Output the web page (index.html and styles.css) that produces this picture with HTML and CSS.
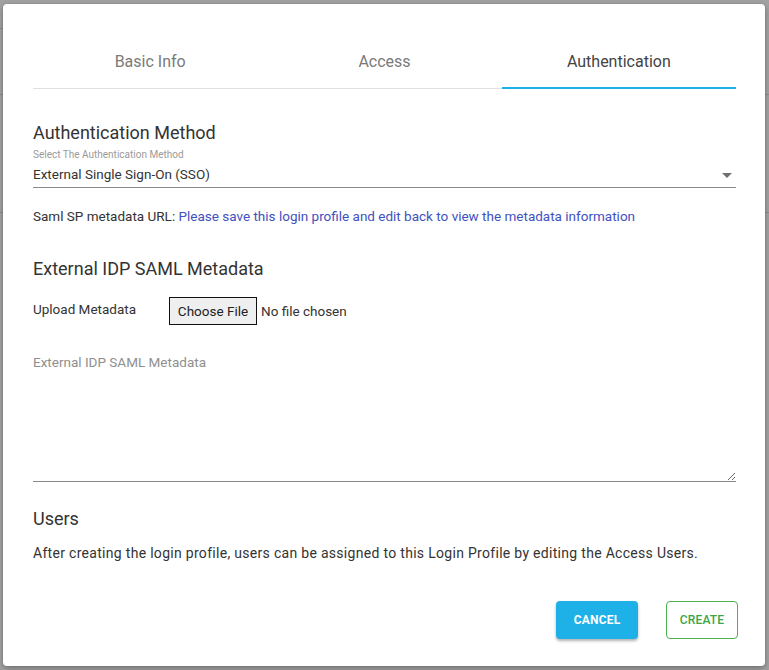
FILE: index.html
```html
<!DOCTYPE html>
<html lang="en">
<head>
<meta charset="utf-8">
<title>Login Profile</title>
<link rel="stylesheet" href="styles.css">
</head>
<body>
<div class="dialog">
  <div class="tabs">
    <div class="tab">Basic Info</div>
    <div class="tab">Access</div>
    <div class="tab active">Authentication</div>
  </div>

  <h2 class="heading first">Authentication Method</h2>
  <div class="select">
    <div class="select-label">Select The Authentication Method</div>
    <div class="select-value">
      <span>External Single Sign-On (SSO)</span>
      <span class="arrow"></span>
    </div>
  </div>

  <p class="saml">Saml SP metadata URL: <a class="link" href="#">Please save this login profile and edit back to view the metadata information</a></p>

  <h2 class="heading idp">External IDP SAML Metadata</h2>
  <div class="upload">
    <span class="upload-label">Upload Metadata</span>
    <input class="file" type="file">
  </div>
  <textarea class="metadata" placeholder="External IDP SAML Metadata"></textarea>

  <h2 class="heading users">Users</h2>
  <p class="note">After creating the login profile, users can be assigned to this Login Profile by editing the Access Users.</p>

  <div class="actions">
    <button class="btn cancel" type="button">CANCEL</button>
    <button class="btn create" type="button">CREATE</button>
  </div>
</div>
</body>
</html>
```
FILE: styles.css
```css
html, body {
  margin: 0;
  padding: 0;
}
body {
  width: 769px;
  height: 670px;
  overflow: hidden;
  font-family: Roboto, "Liberation Sans", sans-serif;
  background-color: #a1a1a1;
  background-image:
    linear-gradient(#8e8e8e, #8e8e8e),
    linear-gradient(#8e8e8e, #8e8e8e),
    linear-gradient(#8e8e8e, #8e8e8e),
    linear-gradient(#8e8e8e, #8e8e8e);
  background-repeat: no-repeat;
  background-size: 10px 1px, 769px 1px, 769px 1px, 20px 1px;
  background-position: 0 28px, 0 94px, 0 212px, 749px 94px;
  padding-top: 4px;
  box-sizing: border-box;
}
.dialog {
  margin-left: 3px;
  width: 762px;
  height: 662px;
  box-sizing: border-box;
  background: #fff;
  border-radius: 4px;
  padding: 37px 29px 0 30px;
  box-shadow: 0 3px 6px rgba(0,0,0,0.25), 0 0 2px rgba(0,0,0,0.2);
  color: #333;
}
.tabs {
  display: grid;
  grid-template-columns: 1fr 1fr 1fr;
  border-bottom: 1px solid #e0e0e0;
}
.tab {
  position: relative;
  height: 47px;
  box-sizing: border-box;
  padding-top: 12px;
  text-align: center;
  font-size: 16px;
  line-height: 18px;
  color: #7a7a7a;
}
.tab.active {
  color: #444;
}
.tab.active::after {
  content: "";
  position: absolute;
  left: 0;
  right: 0;
  bottom: -1px;
  height: 2px;
  background: #1eb1e6;
}
.heading {
  margin: 0;
  font-size: 18px;
  line-height: 22px;
  font-weight: 400;
  color: #333;
}
.heading.first { margin-top: 33px; }
.heading.idp { margin-top: 34px; }
.heading.users { margin-top: 26px; }
.select {
  margin-top: 5px;
}
.select-label {
  font-size: 10px;
  line-height: 12px;
  color: #9a9a9a;
}
.select-value {
  margin-top: 5px;
  display: flex;
  justify-content: space-between;
  align-items: center;
  font-size: 13.5px;
  line-height: 16px;
  color: #333;
  padding-bottom: 5px;
  border-bottom: 1px solid #8a8a8a;
}
.arrow {
  width: 0;
  height: 0;
  border-left: 5px solid transparent;
  border-right: 5px solid transparent;
  border-top: 5px solid #707070;
  margin-right: 4px;
  margin-top: 2px;
}
.saml {
  margin: 20px 0 0;
  font-size: 13.5px;
  line-height: 16px;
  color: #333;
}
.link {
  color: #3f51c1;
  text-decoration: none;
}
.upload {
  margin-top: 17px;
  display: flex;
  align-items: flex-start;
}
.upload-label {
  width: 136px;
  margin-top: 4px;
  font-size: 13.5px;
  line-height: 16px;
  color: #333;
}
.file {
  font-family: Roboto, "Liberation Sans", sans-serif;
  font-size: 13.5px;
  color: #333;
  height: 28px;
  line-height: 28px;
}
.file::file-selector-button {
  font-family: Roboto, "Liberation Sans", sans-serif;
  font-size: 13.5px;
  height: 28px;
  width: 88px;
  padding: 0;
  margin: 0 4px 0 0;
  background: #efefef;
  border: 1.5px solid #111;
  border-radius: 0;
  color: #222;
}
.metadata {
  display: block;
  margin-top: 25px;
  width: 100%;
  height: 132px;
  box-sizing: border-box;
  border: none;
  border-bottom: 1px solid #8a8a8a;
  padding: 5px 0 0;
  font-family: Roboto, "Liberation Sans", sans-serif;
  font-size: 13.5px;
  line-height: 15px;
  color: #333;
  outline: none;
}
.metadata::placeholder {
  color: #8f8f8f;
}
.note {
  margin: 15px 0 0;
  font-size: 14px;
  letter-spacing: 0.3px;
  line-height: 16px;
  color: #333;
}
.actions {
  margin-top: 40px;
  margin-right: -2px;
  display: flex;
  justify-content: flex-end;
  gap: 28px;
}
.btn {
  height: 38px;
  border-radius: 4px;
  font-family: Roboto, "Liberation Sans", sans-serif;
  font-size: 12px;
  letter-spacing: 0.2px;
  cursor: pointer;
}
.cancel {
  width: 82px;
  background: #1eb1e8;
  color: #fff;
  font-weight: 700;
  border: none;
  box-shadow: 0 2px 3px rgba(0,0,0,0.3);
}
.create {
  width: 72px;
  background: #fff;
  color: #3aa645;
  font-weight: 500;
  border: 1px solid #4caf50;
}
```
